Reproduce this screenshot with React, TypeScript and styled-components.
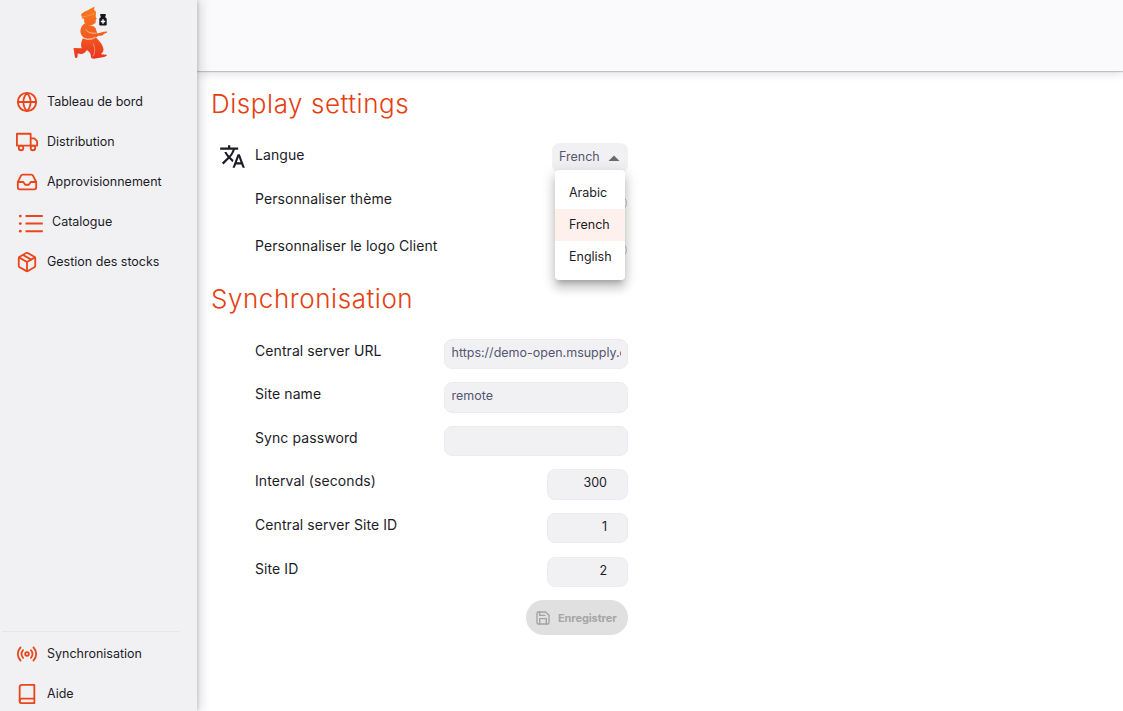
import React from 'react';
import styled, { createGlobalStyle } from 'styled-components';

const Global = createGlobalStyle`
  *, *::before, *::after { box-sizing: border-box; }
  body { margin: 0; background: #fff; font-family: Inter, "Liberation Sans", sans-serif; color: #1c1c28; overflow: hidden; }
  button, input { font-family: inherit; }
`;

const Shell = styled.div`
  display: flex;
  width: 100%;
  height: 711px;
  overflow: hidden;
`;

const Sidebar = styled.aside`
  position: relative;
  z-index: 2;
  flex: none;
  display: flex;
  flex-direction: column;
  width: 197px;
  height: 711px;
  background: #f1f1f4;
  box-shadow: 1px 0 3px rgba(0, 0, 0, 0.14), 4px 0 10px rgba(0, 0, 0, 0.14);
`;

const LogoBox = styled.div`
  height: 81px;
  padding: 6px 0 0 72px;
  svg { display: block; }
`;

const Nav = styled.nav`
  display: flex;
  flex-direction: column;
`;

const LowerNav = styled(Nav)`
  margin: auto 17px 0 2px;
  border-top: 1px solid #e6e6ea;
  padding-top: 1px;
  height: 80px;
  a { padding-left: 14px; }
`;

const NavItem = styled.a<{ $wide?: boolean }>`
  display: flex;
  flex: none;
  align-items: center;
  gap: 9px;
  height: 40px;
  padding-left: ${p => (p.$wide ? 18 : 16)}px;
  color: #1c1c28;
  font-size: 12.5px;
  line-height: 16px;
  svg { flex: none; margin-top: ${p => (p.$wide ? 5 : 2)}px; }
`;

const NavText = styled.span`
  padding-top: 2px;
  white-space: nowrap;
`;

const Content = styled.div`
  flex: 1;
  display: flex;
  flex-direction: column;
`;

const TopBar = styled.header`
  position: relative;
  z-index: 1;
  flex: none;
  height: 71px;
  background: #fafafc;
  box-shadow: 0 1px 1px rgba(0, 0, 0, 0.18), 0 3px 9px rgba(0, 0, 0, 0.12);
`;

const Main = styled.main`
  width: 431px;
  padding: 15px 0 0 14px;
`;

const Title = styled.h1`
  margin: 0;
  height: 36px;
  line-height: 36px;
  font-size: 26px;
  font-weight: 300;
  color: #e63e11;
  letter-spacing: 0.55px;
  white-space: nowrap;
`;

const Group = styled.section<{ $top: number }>`
  display: flex;
  flex-direction: column;
  padding-top: ${p => p.$top}px;
`;

const Row = styled.div<{ $height: number }>`
  display: flex;
  justify-content: space-between;
  height: ${p => p.$height}px;
`;

const Label = styled.div`
  display: flex;
  font-size: 14px;
  line-height: 24px;
  letter-spacing: 0.08px;
  white-space: nowrap;
`;

const IconCell = styled.span`
  width: 44px;
  padding: 0 0 0 8px;
  svg { display: block; }
`;

const SelectWrap = styled.div`
  position: relative;
  width: 76px;
`;

const Select = styled.button`
  display: flex;
  align-items: center;
  justify-content: space-between;
  width: 76px;
  height: 30px;
  padding: 0 8px 4px 7px;
  border: 0;
  border-radius: 8px;
  background: #f1f1f4;
  color: #555770;
  font-size: 12.5px;
  svg { margin-top: 4px; }
`;

const Menu = styled.ul`
  position: absolute;
  z-index: 3;
  top: 27px;
  left: 3px;
  width: 70px;
  height: 110px;
  margin: 0;
  padding: 7px 0;
  list-style: none;
  border-radius: 4px;
  background: #fff;
  box-shadow: 0 5px 5px -3px rgba(0, 0, 0, 0.2), 0 8px 10px 1px rgba(0, 0, 0, 0.14), 0 3px 14px 2px rgba(0, 0, 0, 0.12);
`;

const Option = styled.li<{ $selected?: boolean }>`
  height: 32px;
  padding-left: 14px;
  line-height: 31px;
  font-size: 12.5px;
  background: ${p => (p.$selected ? '#fdf0ed' : 'transparent')};
`;

const Switch = styled.span`
  width: 36px;
  height: 16px;
  margin: 8px 1.5px 0 0;
  border: 1px solid #c4c4cb;
  border-radius: 8px;
`;

const Field = styled.div<{ $numeric?: boolean }>`
  width: ${p => (p.$numeric ? 81 : 184)}px;
  height: 30.5px;
  padding: ${p => (p.$numeric ? '0 20px 0 8px' : '0 6px 0 6.5px')};
  border: 1px solid #ececef;
  border-radius: 8px;
  background: #f1f1f4;
  color: ${p => (p.$numeric ? '#1c1c28' : '#555770')};
  font-size: 12.5px;
  line-height: 25px;
  text-align: ${p => (p.$numeric ? 'right' : 'left')};
`;

const FieldText = styled.div`
  overflow: hidden;
  white-space: nowrap;
`;

const Actions = styled.div`
  display: flex;
  justify-content: flex-end;
`;

const SaveButton = styled.button`
  display: flex;
  align-items: center;
  gap: 7px;
  width: 102px;
  height: 35px;
  padding: 0 0 0 9px;
  border: 0;
  border-radius: 18px;
  background: #e0e0e0;
  color: #a6a6a6;
  font-size: 11px;
  letter-spacing: -0.1px;
  font-weight: 700;
`;

const orange = '#e9471b';

const Stroke = ({ size = 22, width = 2, color = orange, children }: { size?: number; width?: number; color?: string; children: React.ReactNode }) => (
  <svg width={size} height={size} viewBox="0 0 24 24" fill="none" stroke={color} strokeWidth={width} strokeLinecap="round" strokeLinejoin="round">
    {children}
  </svg>
);

const Globe = () => (
  <Stroke>
    <circle cx="12" cy="12" r="10" />
    <path d="M2 12h20M12 2a15.3 15.3 0 0 1 4 10 15.3 15.3 0 0 1-4 10 15.3 15.3 0 0 1-4-10 15.3 15.3 0 0 1 4-10z" />
  </Stroke>
);

const Truck = () => (
  <Stroke>
    <path d="M1 3h15v13H1zM16 8h4l3 3v5h-7z" />
    <circle cx="5.5" cy="18.5" r="2.5" />
    <circle cx="18.5" cy="18.5" r="2.5" />
  </Stroke>
);

const Inbox = () => (
  <Stroke>
    <path d="M22 12h-6l-2 3h-4l-2-3H2" />
    <path d="M5.45 5.11 2 12v6a2 2 0 0 0 2 2h16a2 2 0 0 0 2-2v-6l-3.45-6.89A2 2 0 0 0 16.76 4H7.24a2 2 0 0 0-1.79 1.11z" />
  </Stroke>
);

const List = () => (
  <svg width="25" height="20" viewBox="0 0 25 20" fill={orange}>
    <path d="M7.5 1.1h17.3v2H7.5zM7.5 8.6h17.3v2H7.5zM7.5 16.2h17.3v2H7.5z" />
    <circle cx="2.3" cy="2.1" r="1.4" />
    <circle cx="2.3" cy="9.6" r="1.4" />
    <circle cx="2.3" cy="17.2" r="1.4" />
  </svg>
);

const Package = () => (
  <Stroke>
    <path d="M16.5 9.4 7.5 4.21M21 16V8a2 2 0 0 0-1-1.73l-7-4a2 2 0 0 0-2 0l-7 4A2 2 0 0 0 3 8v8a2 2 0 0 0 1 1.73l7 4a2 2 0 0 0 2 0l7-4A2 2 0 0 0 21 16z" />
    <path d="M3.27 6.96 12 12.01l8.73-5.05M12 22.08V12" />
  </Stroke>
);

const Radio = () => (
  <Stroke>
    <circle cx="12" cy="12" r="2" />
    <path d="M16.24 7.76a6 6 0 0 1 0 8.49M7.76 16.24a6 6 0 0 1 0-8.49M19.07 4.93a10 10 0 0 1 0 14.14M4.93 19.07a10 10 0 0 1 0-14.14" />
  </Stroke>
);

const Book = () => (
  <Stroke>
    <path d="M4 19.5A2.5 2.5 0 0 1 6.5 17H20" />
    <path d="M6.5 2H20v20H6.5A2.5 2.5 0 0 1 4 19.5v-15A2.5 2.5 0 0 1 6.5 2z" />
  </Stroke>
);

const Save = () => (
  <Stroke size={16} color="#a2a2a2">
    <path d="M19 21H5a2 2 0 0 1-2-2V5a2 2 0 0 1 2-2h11l5 5v11a2 2 0 0 1-2 2z" />
    <path d="M17 21v-8H7v8M7 3v5h8" />
  </Stroke>
);

const Translate = () => (
  <svg width="27" height="27" viewBox="0 0 24 24" fill="#1c1c28">
    <path d="m12.87 15.07-2.54-2.51.03-.03c1.74-1.94 2.98-4.17 3.71-6.53H17V4h-7V2H8v2H1v1.99h11.17C11.5 7.92 10.44 9.75 9 11.35 8.07 10.32 7.3 9.19 6.69 8h-2c.73 1.63 1.73 3.17 2.98 4.56l-5.09 5.02L4 19l5-5 3.11 3.11.76-2.04zM18.5 10h-2L12 22h2l1.12-3h4.75L21 22h2l-4.5-12zm-2.62 7 1.62-4.33L19.12 17h-3.24z" />
  </svg>
);

const Logo = () => (
  <svg width="38" height="54" viewBox="0 0 38 54">
    <defs>
      <linearGradient id="courier" x1="0" y1="0" x2="0" y2="54" gradientUnits="userSpaceOnUse">
        <stop offset="0" stopColor="#f47a1f" />
        <stop offset="0.5" stopColor="#f4601f" />
        <stop offset="1" stopColor="#e8301f" />
      </linearGradient>
    </defs>
    <g fill="url(#courier)">
      <path d="M9 8.4C12 5 18 3.6 22.6.4L22 3.6l2 2.4v3L10.5 13z" />
      <path d="M12 11.5 23.5 8.5l.3 2.5 1 2-1 .7-.2 3.3-4 2.2h-5.2l-2.2-3z" />
      <path d="M12.5 17.5c4 2.4 8.5 1.5 11 4.5l1.8 5.4 6.5-1.6 2.9-.3c.9.1.7.9 0 1.2l-2.5 1c-1.5 2.2-3.7 2.2-5.7 2.1-5 3.8-10.8 5.200-15.100 1.400-4.300-3.600-4-9.700 1.100-13.700z" />
      <path d="M10.8 32.3c4.200 2.200 9.300 1.700 13.200-.9 3.300 3.300 7.700 8 7.500 12.600-.2 2-1.700 3.300-2.700 4.300l6 .5c.5 1.100-1.100 1.800-2.700 2.200l-10.200 1.700c-1.700-.1-3-.9-3-2.300 0-2.900-1.500-4.500-4-6.400-2.400 3.900-4.400 4.700-9.200 3.600l-.2 3.400c-.5 1.400-2.200 1.200-2.600 0L1.500 42l8.200.2c-1.300-3.600-.4-6.600 1.100-9.900z" />
    </g>
    <path d="M10.6 31.6c4.2 2 8.7 1.700 12.600-.5M13.800 23.500c1.500 2.600 5.600 4.300 10.600 3.600" fill="none" stroke="#fbd3b5" strokeWidth=".8" />
    <path d="M9.800 11c4.600-.2 9-2.300 14-3.800" fill="none" stroke="#f9b98a" strokeWidth=".5" />
    <path d="M21 37.500c2.300 4.200 2.300 9-.2 13" fill="none" stroke="#f7b29d" strokeWidth=".7" />
    <path d="M28.300 8h5.400v2.400H33v.8c1 .3 1.700 1 1.700 1.700v5.600c0 .6-.4 1-1 1h-5.400c-.6 0-1-.4-1-1v-5.600c0-.7.7-1.400 1.700-1.700v-.8h-.7z" fill="#15151c" />
    <path d="M30.300 13.300h1.400v1.500h1.500v1.400h-1.500v1.500h-1.400v-1.500h-1.500v-1.400h1.500z" fill="#fff" />
  </svg>
);

const textFields = [
  { label: 'Central server URL', value: 'https://demo-open.msupply.org' },
  { label: 'Site name', value: 'remote' },
  { label: 'Sync password', value: '' },
  { label: 'Interval (seconds)', value: '300', numeric: true },
  { label: 'Central server Site ID', value: '1', numeric: true },
  { label: 'Site ID', value: '2', numeric: true },
];

export default function App() {
  return (
    <>
      <Global />
      <Shell>
        <Sidebar>
          <LogoBox><Logo /></LogoBox>
          <Nav>
            <NavItem><Globe /><NavText>Tableau de bord</NavText></NavItem>
            <NavItem><Truck /><NavText>Distribution</NavText></NavItem>
            <NavItem><Inbox /><NavText>Approvisionnement</NavText></NavItem>
            <NavItem $wide><List /><NavText>Catalogue</NavText></NavItem>
            <NavItem><Package /><NavText>Gestion des stocks</NavText></NavItem>
          </Nav>
          <LowerNav>
            <NavItem><Radio /><NavText>Synchronisation</NavText></NavItem>
            <NavItem><Book /><NavText>Aide</NavText></NavItem>
          </LowerNav>
        </Sidebar>
        <Content>
          <TopBar />
          <Main>
            <Title>Display settings</Title>
            <Group $top={21}>
              <Row $height={44}>
                <Label><IconCell><Translate /></IconCell>Langue</Label>
                <SelectWrap>
                  <Select>
                    French
                    <svg width="12" height="6" viewBox="0 0 12 6"><path d="M.5 6 6 .5 11.5 6z" fill="#6b6b6b" /></svg>
                  </Select>
                  <Menu>
                    <Option>Arabic</Option>
                    <Option $selected>French</Option>
                    <Option>English</Option>
                  </Menu>
                </SelectWrap>
              </Row>
              <Row $height={47}>
                <Label><IconCell />Personnaliser thème</Label>
                <Switch />
              </Row>
              <Row $height={47}>
                <Label><IconCell />Personnaliser le logo Client</Label>
                <Switch />
              </Row>
            </Group>
            <Title>Synchronisation</Title>
            <Group $top={21.6}>
              {textFields.map(f => (
                <Row key={f.label} $height={43.6}>
                  <Label><IconCell />{f.label}</Label>
                  <Field $numeric={f.numeric}><FieldText>{f.value}</FieldText></Field>
                </Row>
              ))}
            </Group>
            <Actions>
              <SaveButton><Save />Enregistrer</SaveButton>
            </Actions>
          </Main>
        </Content>
      </Shell>
    </>
  );
}
